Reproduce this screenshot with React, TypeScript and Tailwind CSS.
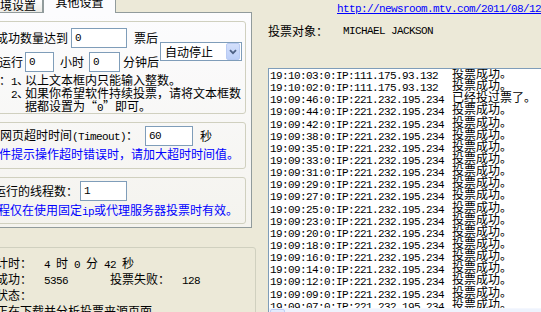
import type { ReactNode } from "react";

const cjk = "font-['Noto_Sans_CJK_SC','Liberation_Sans',sans-serif]";
const mono = "font-['Liberation_Mono','Noto_Sans_CJK_SC',monospace] text-[11px] tracking-[-0.6px] whitespace-pre";
const groupClass = "rounded-[3px] border border-[#d0d0bf]";
const blueClass = "h-[14px] text-[#0000ff] leading-[14px] whitespace-nowrap";

function Mono({ children, className = "" }: { children: ReactNode; className?: string }) {
  return <span className={`${mono} ${className}`}>{children}</span>;
}

function TextBox({ value, className = "" }: { value: string; className?: string }) {
  return (
    <div className={`flex h-[20px] shrink-0 items-center border border-[#7f9db9] bg-white pl-[3px] ${className}`}>
      <Mono>{value}</Mono>
    </div>
  );
}

function ComboBox({ className = "" }: { className?: string }) {
  return (
    <div className={`flex h-[19px] w-[82px] shrink-0 items-center border border-[#7f9db9] bg-white pl-[4px] ${className}`}>
      <span className="flex-1 whitespace-nowrap">自动停止</span>
      <div className="mr-px flex h-[17px] w-[14px] items-center justify-center rounded-[2px] border border-[#b9cbf3] bg-linear-to-b from-[#d4e0fb] to-[#bccff8]">
        <svg width="8" height="6" viewBox="0 0 8 6">
          <path d="M1 1.2 L4 4.2 L7 1.2" fill="none" stroke="#4d6185" strokeWidth="1.8" />
        </svg>
      </div>
    </div>
  );
}

const logLines: [string, string][] = [
  ["19:10:03:0:IP:111.175.93.132", "投票成功。"],
  ["19:10:02:0:IP:111.175.93.132", "投票成功。"],
  ["19:09:46:0:IP:221.232.195.234", "已经投过票了。"],
  ...["44", "42", "38", "35", "33", "31", "29", "27", "25", "23", "20", "18", "16", "14", "12", "09", "07"].map(
    (s): [string, string] => [`19:09:${s}:0:IP:221.232.195.234`, "投票成功。"]
  )
];

function SettingsPanel() {
  return (
    <div className="w-[272px] border border-[#919b9c] bg-linear-to-b from-[#fcfcfe] to-[#f4f3ee] pt-[8px] pr-[5px] pb-[3px] pl-[4px]">
      <div className={`${groupClass} pt-[6px] pb-[1px] pl-[10px]`}>
        <div className="flex items-start">
          <div className="flex flex-col gap-[4px]">
            <div className="flex h-[20px] items-center whitespace-nowrap">
              <span className="w-[72px] shrink-0">成功数量达到</span>
              <TextBox value="0" className="ml-[3px] w-[56px]" />
              <span className="ml-[7px]">票后</span>
            </div>
            <div className="ml-[3px] flex h-[20px] items-center whitespace-nowrap">
              <span>运行</span>
              <TextBox value="0" className="ml-[2px] w-[29px]" />
              <span className="ml-[6px]">小时</span>
              <TextBox value="0" className="ml-[5px] w-[31px]" />
              <span className="ml-[3px]">分钟后</span>
            </div>
          </div>
          <ComboBox className="mt-[14px] ml-[1px]" />
        </div>
        <div className="mt-[1px] grid auto-rows-[13px] grid-cols-[15px_14px_auto] leading-[13px] whitespace-nowrap">
          <span className="overflow-visible">
            <span className="-ml-[9px]">注：</span>
          </span>
          <span><Mono>1</Mono>、</span>
          <span>以上文本框内只能输入整数。</span>
          <span />
          <span><Mono>2</Mono>、</span>
          <span>如果你希望软件持续投票，请将文本框数</span>
          <span />
          <span />
          <span>据都设置为“<Mono>0</Mono>”即可。</span>
        </div>
      </div>

      <div className={`${groupClass} mt-[8px] pt-[3px] pb-[7px] pl-[10px]`}>
        <div className="ml-[4px] flex h-[20px] items-center whitespace-nowrap">
          <span>网页超时时间<Mono>(Timeout)</Mono>：</span>
          <TextBox value="60" className="ml-[7px] w-[48px]" />
          <span className="ml-[7px]">秒</span>
        </div>
        <div className={`${blueClass} mt-[1px] ml-[3px]`}>件提示操作超时错误时，请加大超时时间值。</div>
      </div>

      <div className={`${groupClass} mt-[8px] pt-[3px] pb-[6px] pl-[10px]`}>
        <div className="-ml-[2px] flex h-[20px] items-center whitespace-nowrap">
          <span>运行的线程数：</span>
          <TextBox value="1" className="ml-[2px] w-[47px]" />
        </div>
        <div className={`${blueClass} mt-[2px] ml-[2px]`}>
          程仅在使用固定<Mono>ip</Mono>或代理服务器投票时有效。
        </div>
      </div>
    </div>
  );
}

function StatsGroup() {
  return (
    <div className={`${groupClass} mt-[19px] ml-[5px] w-[271px] shrink-0 pt-[7px] pl-[10px] leading-[16px] whitespace-nowrap`}>
      <div className="h-[16px]">
        <span className="inline-block w-[48px]">计时：</span>
        <Mono>4 </Mono>时<Mono> 0 </Mono>分<Mono> 42 </Mono>秒
      </div>
      <div className="h-[16px]">
        <span className="inline-block w-[48px]">成功：</span>
        <Mono className="inline-block w-[66px]">5356</Mono>
        <span className="inline-block w-[72px]">投票失败：</span>
        <Mono>128</Mono>
      </div>
      <div className="h-[16px]">状态：</div>
      <div className="h-[16px]">正在下载并分析投票来源页面</div>
    </div>
  );
}

export default function App() {
  return (
    <div className={`flex h-[312px] w-[541px] overflow-hidden bg-[#ece9d8] text-[12px] leading-[14px] text-black ${cjk}`}>
      <div className="-ml-[20px] flex w-[276px] shrink-0 flex-col">
        <div className="flex h-[12px] items-end">
          <div className="h-[12px] w-[63px] border-r border-[#919b9c] bg-linear-to-b from-[#fefefe] to-[#ecebe6] pl-[8px] leading-[10px] whitespace-nowrap">
            环境设置
          </div>
          <div className="relative z-10 -mb-px h-[13px] w-[73px] border-x border-[#919b9c] bg-[#fcfcfe] text-center">
            <div className="-mt-[4px] leading-[12px] whitespace-nowrap">其他设置</div>
          </div>
        </div>
        <SettingsPanel />
        <StatsGroup />
      </div>

      <div className="min-w-0 flex-1 whitespace-nowrap">
        <div className="mt-[2px] ml-[81px] flex h-[14px] items-center">
          <Mono className="text-[#0000ff] underline">http://newsroom.mtv.com/2011/08/12</Mono>
        </div>
        <div className="mt-[8px] ml-[12px] flex h-[14px] items-center">
          <span className="w-[75px] shrink-0">投票对象：</span>
          <Mono>MICHAEL JACKSON</Mono>
        </div>
        <div className="mt-[30px] ml-[12px] flex h-[270px] w-[300px] flex-col border border-[#7f9db9] bg-white">
          <div className="h-[239px] shrink-0 overflow-hidden pl-[1px]">
            {logLines.map(([ip, msg], i) => (
              <div key={i} className="flex h-[12.15px] items-center">
                <Mono className="relative top-[1px] w-[182px] shrink-0 leading-[12px]">{ip}</Mono>
                <span className="relative -top-[2px] leading-[12px]">{msg}</span>
              </div>
            ))}
          </div>
          <div className="flex h-[17px] shrink-0 border-t border-[#f4f7fe] bg-[#eef3fd]">
            <div className="ml-px h-[16px] w-[15px] rounded-[2px] border border-[#bccdf5] bg-linear-to-b from-[#e4ecfd] to-[#c9d8f9]" />
            <div className="flex-1" />
          </div>
        </div>
      </div>
    </div>
  );
}
